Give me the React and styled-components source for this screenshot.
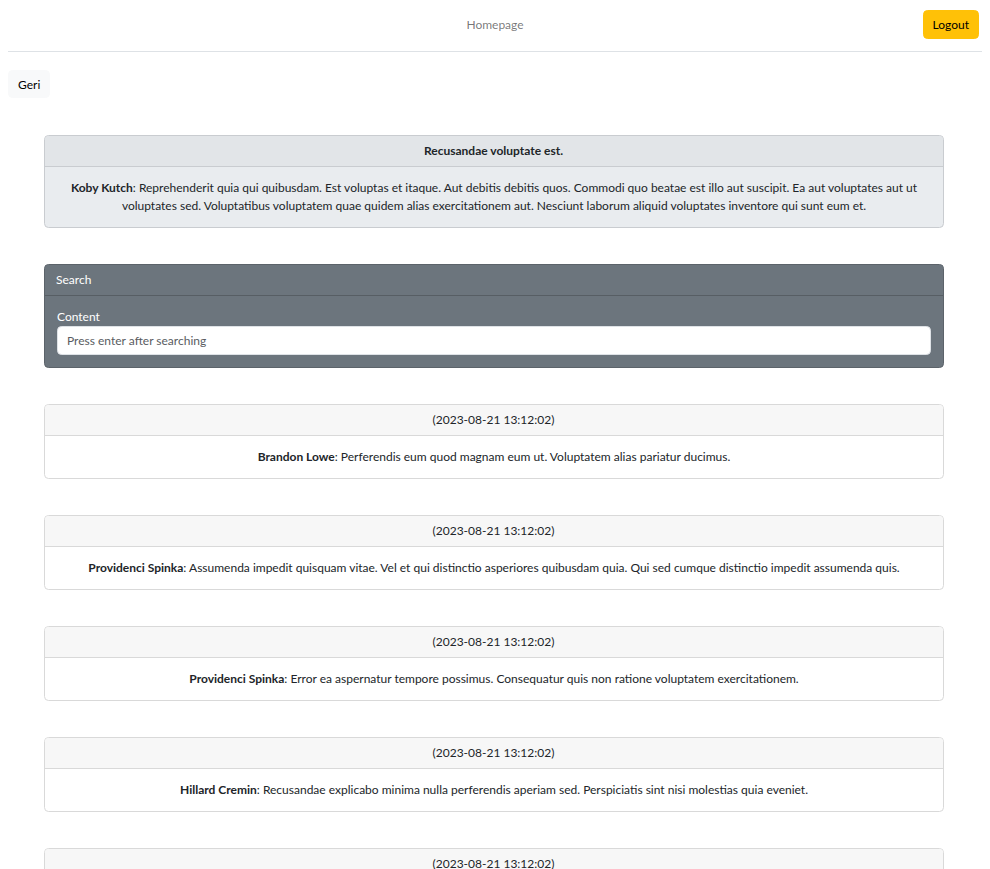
import styled, { createGlobalStyle } from "styled-components";

const GlobalStyle = createGlobalStyle`
  body {
    margin: 0;
    font-family: Lato, "Liberation Sans", sans-serif;
    font-size: 12px;
    line-height: 1.5;
    color: #212529;
    background: #fff;
  }
  * { box-sizing: border-box; }
`;

const comments = [
  {
    name: "Brandon Lowe",
    text: "Perferendis eum quod magnam eum ut. Voluptatem alias pariatur ducimus.",
  },
  {
    name: "Providenci Spinka",
    text: "Assumenda impedit quisquam vitae. Vel et qui distinctio asperiores quibusdam quia. Qui sed cumque distinctio impedit assumenda quis.",
  },
  {
    name: "Providenci Spinka",
    text: "Error ea aspernatur tempore possimus. Consequatur quis non ratione voluptatem exercitationem.",
  },
  {
    name: "Hillard Cremin",
    text: "Recusandae explicabo minima nulla perferendis aperiam sed. Perspiciatis sint nisi molestias quia eveniet.",
  },
  {
    name: "Brandon Lowe",
    text: "Perferendis eum quod magnam eum ut. Voluptatem alias pariatur ducimus.",
  },
];

function App() {
  return (
    <Page>
      <GlobalStyle />
      <Navbar>
        <NavLink>Homepage</NavLink>
        <LogoutButton>Logout</LogoutButton>
      </Navbar>
      <BackButton>Geri</BackButton>
      <Content>
        <Card variant="post">
          <CardHeader variant="post">
            <strong>Recusandae voluptate est.</strong>
          </CardHeader>
          <CardBody>
            <strong>Koby Kutch</strong>: Reprehenderit quia qui quibusdam. Est
            voluptas et itaque. Aut debitis debitis quos. Commodi quo beatae est
            illo aut suscipit. Ea aut voluptates aut ut voluptates sed.
            Voluptatibus voluptatem quae quidem alias exercitationem aut.
            Nesciunt laborum aliquid voluptates inventore qui sunt eum et.
          </CardBody>
        </Card>

        <Card variant="search">
          <CardHeader variant="search" align="left">
            Search
          </CardHeader>
          <SearchBody>
            <Label>Content</Label>
            <Input placeholder="Press enter after searching" />
          </SearchBody>
        </Card>

        {comments.map((c, i) => (
          <Card key={i}>
            <CardHeader>(2023-08-21 13:12:02)</CardHeader>
            <CardBody>
              <strong>{c.name}</strong>: {c.text}
            </CardBody>
          </Card>
        ))}
      </Content>
    </Page>
  );
}

export default App;

const Page = styled.div`
  padding: 0 8px;
`;

const Navbar = styled.nav`
  position: relative;
  height: 52px;
  display: flex;
  align-items: center;
  justify-content: center;
  padding-bottom: 2px;
  border-bottom: 1px solid #dee2e6;
`;

const NavLink = styled.span`
  color: rgba(0, 0, 0, 0.55);
  font-size: 12px;
`;

const LogoutButton = styled.button`
  position: absolute;
  right: 3px;
  top: 10px;
  height: 29px;
  padding: 0 9px;
  font-family: inherit;
  font-size: 12px;
  color: #000;
  background: #ffc107;
  border: 1px solid #ffc107;
  border-radius: 4.5px;
`;

const BackButton = styled.button`
  display: block;
  margin-top: 18px;
  height: 28px;
  padding: 0 9px;
  font-family: inherit;
  font-size: 12px;
  color: #000;
  background: #f8f9fa;
  border: 1px solid #f8f9fa;
  border-radius: 4.5px;
`;

const Content = styled.main`
  width: 900px;
  margin-left: 36px;
  padding-top: 37px;
  display: flex;
  flex-direction: column;
  gap: 36px;
`;

const cardBg = { post: "#e9ecef", search: "#6c757d" };
const headerBg = { post: "#e2e5e8", search: "#6c757d" };
const borderColor = { post: "#c9ccd0", search: "#5c636a" };

const Card = styled.div`
  background: ${(p) => cardBg[p.variant] || "#fff"};
  border: 1px solid ${(p) => borderColor[p.variant] || "#d9d9d9"};
  border-radius: 4.5px;
  overflow: hidden;
  color: ${(p) => (p.variant === "search" ? "#fff" : "#212529")};
`;

const CardHeader = styled.div`
  padding: 6px 12px 6px 11px;
  text-align: ${(p) => p.align || "center"};
  background: ${(p) => headerBg[p.variant] || "#f7f7f7"};
  border-bottom: 1px solid
    ${(p) => (p.variant === "search" ? "#575e64" : p.variant === "post" ? "#c9ccd0" : "#d9d9d9")};
`;

const CardBody = styled.div`
  padding: 12px;
  text-align: center;
`;

const SearchBody = styled.div`
  padding: 12px;
`;

const Label = styled.label`
  display: block;
`;

const Input = styled.input`
  display: block;
  width: 100%;
  height: 29px;
  padding: 0 9px;
  font-family: inherit;
  font-size: 12px;
  color: #212529;
  background: #fff;
  border: 1px solid #dee2e6;
  border-radius: 4.5px;
  &::placeholder {
    color: #595c5f;
  }
`;
